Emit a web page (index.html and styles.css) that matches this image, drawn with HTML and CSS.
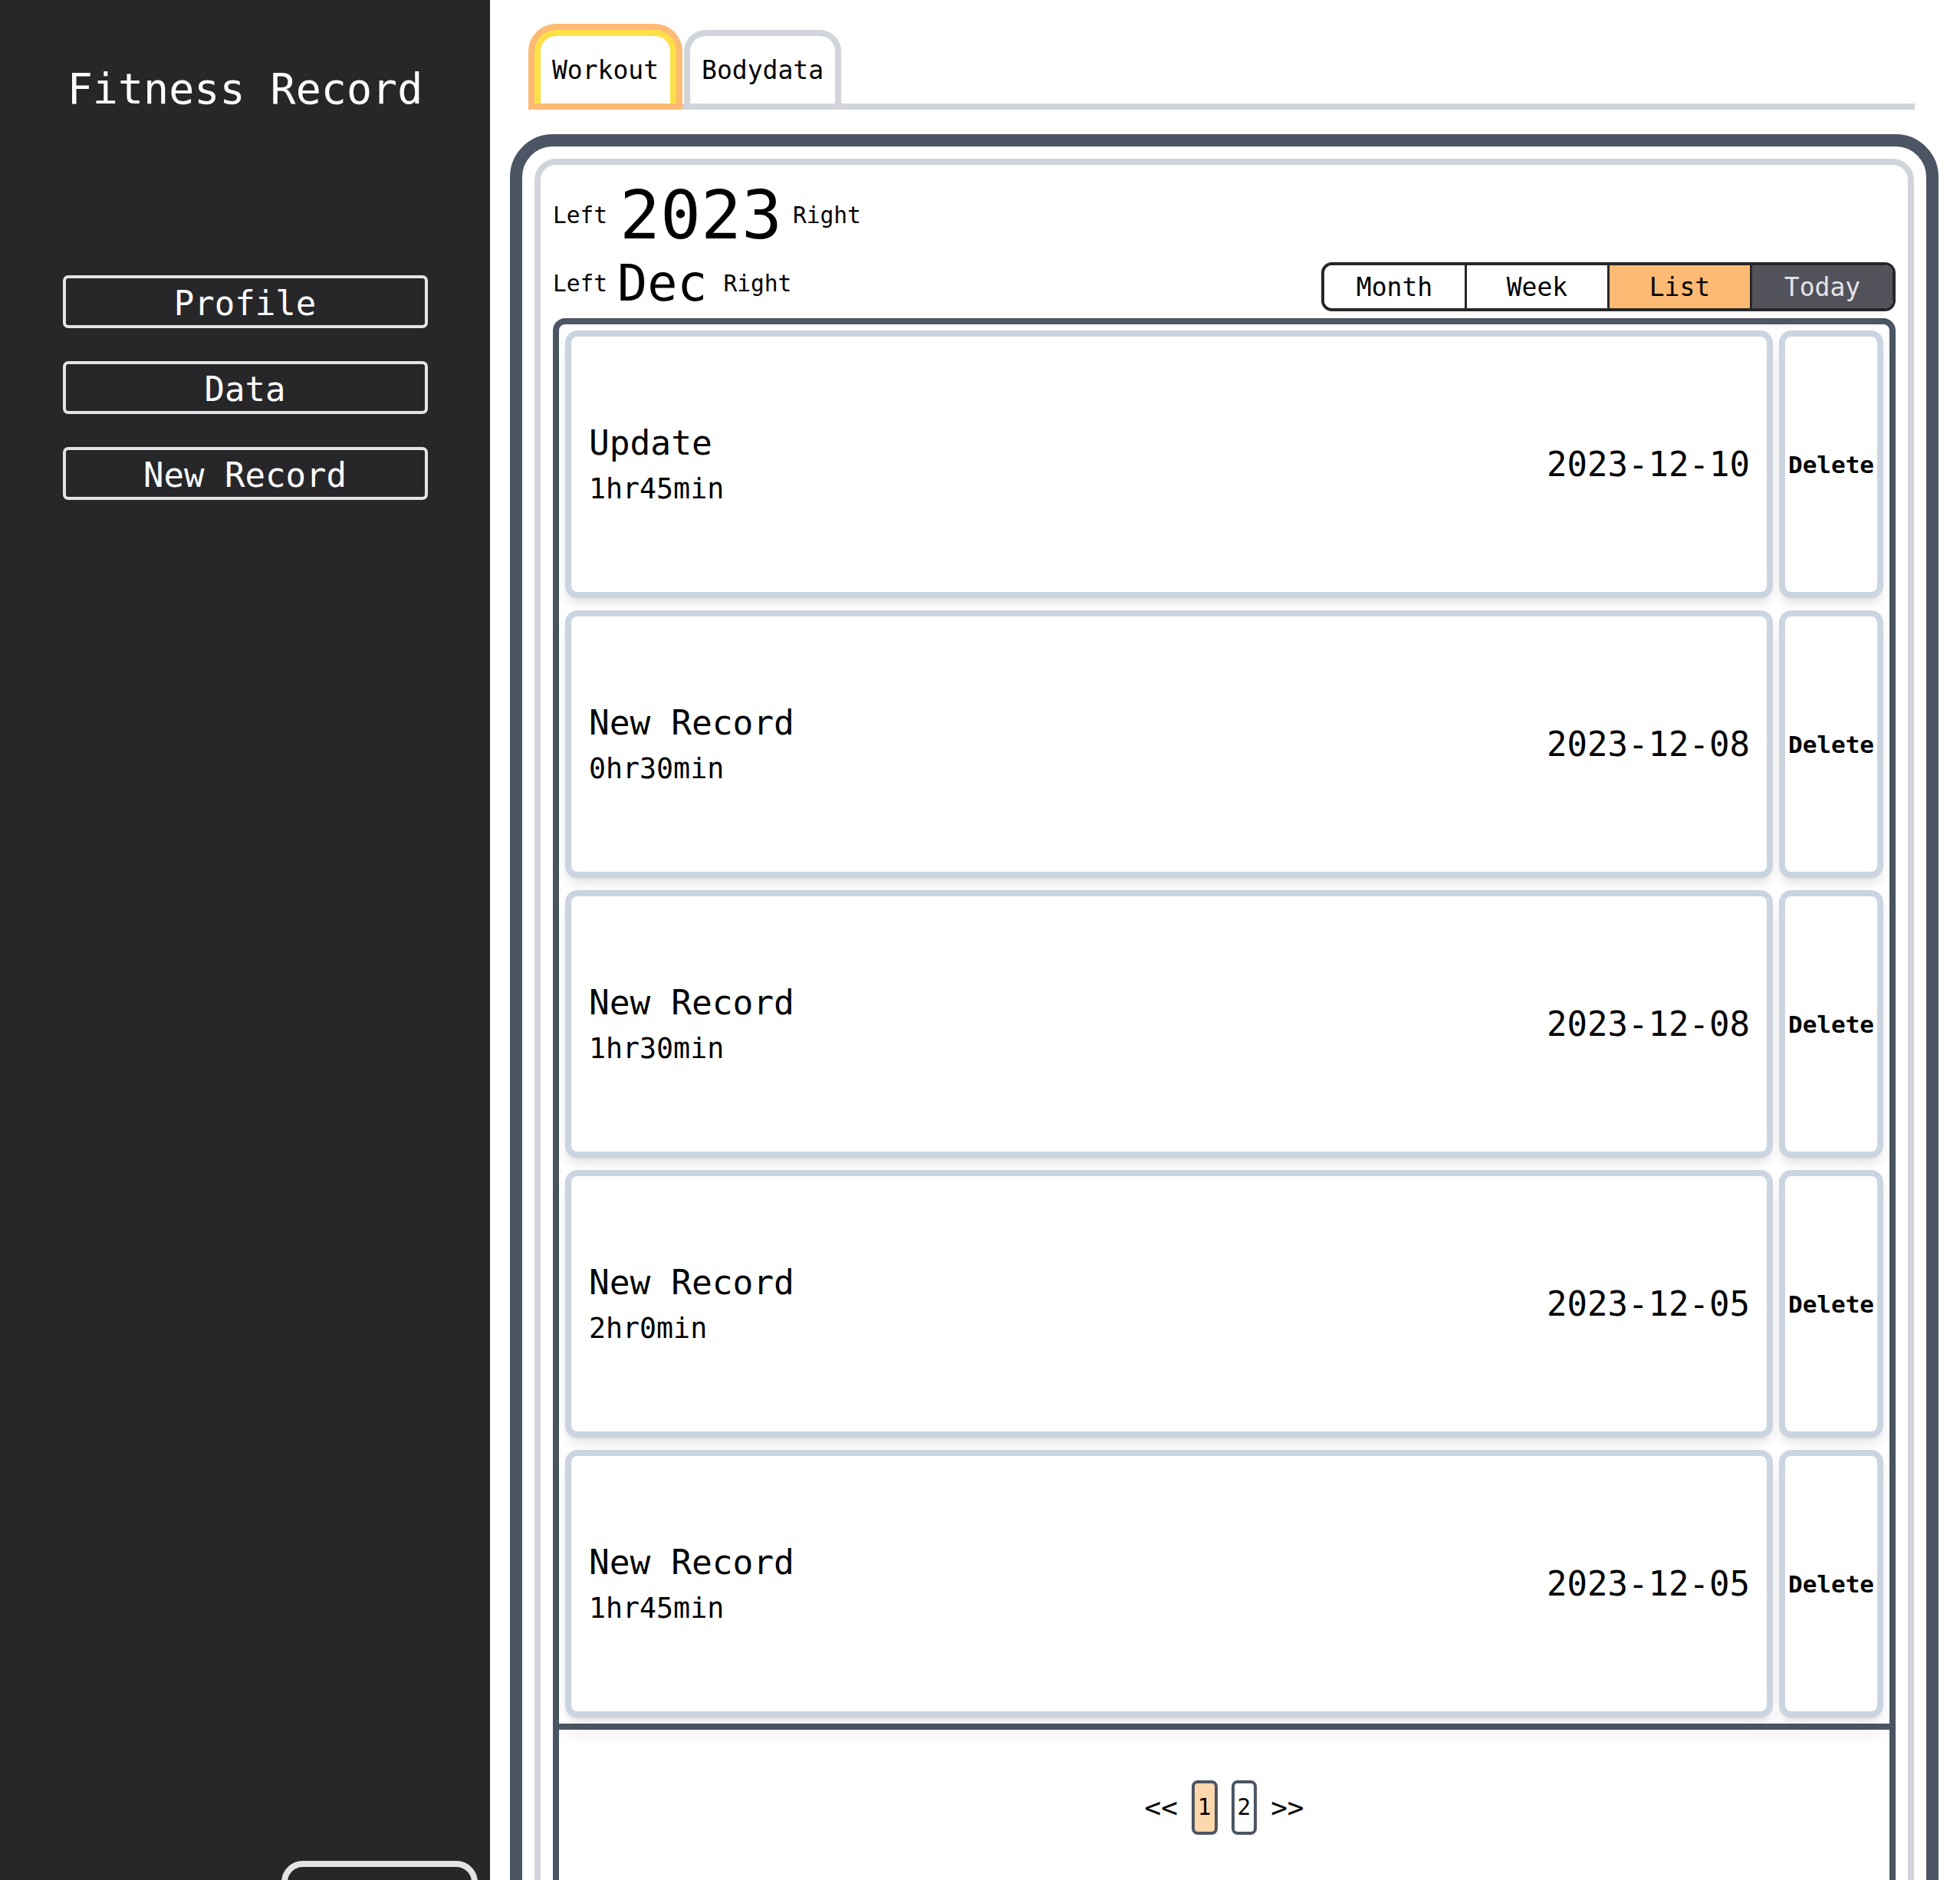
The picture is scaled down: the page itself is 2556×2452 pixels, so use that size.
FILE: index.html
```html
<!DOCTYPE html>
<html lang="en">
<head>
<meta charset="utf-8">
<title>Fitness Record</title>
<link rel="stylesheet" href="styles.css">
</head>
<body>
<div class="app">
  <aside class="sidebar">
    <h1 class="brand">Fitness Record</h1>
    <nav class="nav">
      <button class="nav-btn">Profile</button>
      <button class="nav-btn">Data</button>
      <button class="nav-btn">New Record</button>
    </nav>
    <button class="logout" aria-label="Logout"></button>
  </aside>

  <main class="main">
    <div class="tabs">
      <button class="tab tab-active">Workout</button>
      <button class="tab">Bodydata</button>
    </div>

    <section class="frame">
      <div class="card">
        <div class="year-row">
          <button class="arrow">Left</button>
          <span class="year">2023</span>
          <button class="arrow">Right</button>
        </div>

        <div class="month-row">
          <div class="month-nav">
            <button class="arrow">Left</button>
            <span class="month">Dec</span>
            <button class="arrow">Right</button>
          </div>
          <div class="toggle">
            <button class="seg">Month</button>
            <button class="seg">Week</button>
            <button class="seg seg-on">List</button>
            <button class="seg seg-today">Today</button>
          </div>
        </div>

        <div class="list">
          <div class="rows">
            <div class="row">
              <div class="rec">
                <div class="rec-info">
                  <div class="rec-name">Update</div>
                  <div class="rec-dur">1hr45min</div>
                </div>
                <div class="rec-date">2023-12-10</div>
              </div>
              <button class="del">Delete</button>
            </div>
            <div class="row">
              <div class="rec">
                <div class="rec-info">
                  <div class="rec-name">New Record</div>
                  <div class="rec-dur">0hr30min</div>
                </div>
                <div class="rec-date">2023-12-08</div>
              </div>
              <button class="del">Delete</button>
            </div>
            <div class="row">
              <div class="rec">
                <div class="rec-info">
                  <div class="rec-name">New Record</div>
                  <div class="rec-dur">1hr30min</div>
                </div>
                <div class="rec-date">2023-12-08</div>
              </div>
              <button class="del">Delete</button>
            </div>
            <div class="row">
              <div class="rec">
                <div class="rec-info">
                  <div class="rec-name">New Record</div>
                  <div class="rec-dur">2hr0min</div>
                </div>
                <div class="rec-date">2023-12-05</div>
              </div>
              <button class="del">Delete</button>
            </div>
            <div class="row">
              <div class="rec">
                <div class="rec-info">
                  <div class="rec-name">New Record</div>
                  <div class="rec-dur">1hr45min</div>
                </div>
                <div class="rec-date">2023-12-05</div>
              </div>
              <button class="del">Delete</button>
            </div>
          </div>

          <div class="pager">
            <button class="pg-arrow">&lt;&lt;</button>
            <button class="page page-on">1</button>
            <button class="page">2</button>
            <button class="pg-arrow">&gt;&gt;</button>
          </div>
        </div>
      </div>
    </section>
  </main>
</div>
</body>
</html>
```

FILE: styles.css
```css
* {
  box-sizing: border-box;
}

html,
body {
  margin: 0;
  height: 100%;
  overflow: hidden;
}

body {
  font-family: "DejaVu Sans Mono", monospace;
  background: #ffffff;
  color: #000000;
}

button {
  font: inherit;
  color: inherit;
  background: none;
  border: 0;
  padding: 0;
  margin: 0;
  cursor: pointer;
}

.app {
  display: flex;
  align-items: flex-start;
}

/* ---------- sidebar ---------- */
.sidebar {
  flex: 0 0 639px;
  height: 100vh;
  background: #27272a;
  display: flex;
  flex-direction: column;
  align-items: center;
  padding-top: 84px;
}

.brand {
  margin: 0;
  font-size: 55px;
  font-weight: normal;
  line-height: normal;
  color: #ffffff;
  white-space: pre;
}

.nav {
  margin-top: 211px;
  width: 476px;
  display: flex;
  flex-direction: column;
  gap: 43px;
}

.nav-btn {
  height: 69px;
  padding-top: 4px;
  border: 4px solid #e4e4e7;
  border-radius: 7px;
  color: #ffffff;
  font-size: 44px;
  line-height: 57px;
  white-space: pre;
}

.logout {
  margin-top: auto;
  margin-bottom: -75px;
  margin-right: 16px;
  align-self: flex-end;
  width: 256px;
  height: 100px;
  flex: none;
  border: 8px solid #e4e4e7;
  border-radius: 28px;
}

/* ---------- main ---------- */
.main {
  flex: 1;
  min-width: 0;
  padding: 39px 28px 0 26px;
}

.tabs {
  display: flex;
  align-items: flex-end;
  gap: 10px;
  margin: 0 31px 0 32px;
  border-bottom: 8px solid #d1d5db;
}

.tab {
  height: 96px;
  padding: 0 15px;
  border: 8px solid #d1d5db;
  border-bottom: 0;
  border-radius: 28px 28px 0 0;
  font-size: 33px;
  line-height: 90px;
  background: #ffffff;
}

.tab-active {
  border-color: #fde047;
  box-shadow: 0 0 0 8px #fdba74;
}

.frame {
  margin-top: 32px;
  border: 16px solid #4b5563;
  border-radius: 56px;
  padding: 16px;
}

.card {
  border: 8px solid #d1d5db;
  border-radius: 28px;
  padding: 22px 16px 16px;
}

.year-row {
  display: flex;
  align-items: center;
}

.arrow {
  font-size: 29.5px;
  line-height: normal;
}

.year {
  font-size: 88px;
  line-height: 1;
  margin: 0 14px 0 16px;
}

.month-row {
  display: flex;
  justify-content: space-between;
  align-items: flex-end;
  margin-top: 8px;
}

.month-nav {
  display: flex;
  align-items: center;
}

.month {
  font-size: 65px;
  line-height: 73px;
  margin: 0 21px 0 13px;
}

.toggle {
  display: flex;
  height: 64px;
  border: 4px solid #27272a;
  border-radius: 14px;
  overflow: hidden;
}

.seg {
  flex: none;
  width: 183px;
  font-size: 33px;
  line-height: 58px;
  text-align: center;
  background: #ffffff;
}

.seg + .seg {
  width: 186px;
  border-left: 3px solid #27272a;
}

.seg-on {
  background: #fdba74;
}

.seg-today {
  background: #52525b;
  color: #e4e4e7;
}

/* ---------- list ---------- */
.list {
  margin-top: 9px;
  border: 8px solid #4b5563;
  border-radius: 16px;
}

.rows {
  display: flex;
  flex-direction: column;
  gap: 16px;
  padding: 8px;
  border-bottom: 8px solid #4b5563;
  box-shadow: 0 12px 22px -6px rgba(0, 0, 0, 0.06);
}

.row {
  display: flex;
  gap: 8px;
  height: 349px;
}

.rec {
  flex: 1;
  display: flex;
  align-items: center;
  justify-content: space-between;
  padding: 0 22px 0 23px;
  border: 8px solid #cbd5e1;
  border-radius: 16px;
  background: #ffffff;
  box-shadow: 0 10px 15px -3px rgba(0, 0, 0, 0.1), 0 4px 6px -4px rgba(0, 0, 0, 0.1);
}

.rec-name {
  font-size: 44.5px;
  line-height: 1.5;
  white-space: pre;
}

.rec-dur {
  font-size: 36.6px;
  line-height: 1.5;
}

.rec-date {
  font-size: 44px;
}

.del {
  flex: none;
  width: 136px;
  border: 8px solid #cbd5e1;
  border-radius: 16px;
  background: #ffffff;
  font-size: 31px;
  font-weight: bold;
  text-align: center;
  box-shadow: 0 10px 15px -3px rgba(0, 0, 0, 0.1), 0 4px 6px -4px rgba(0, 0, 0, 0.1);
}

.pager {
  display: flex;
  justify-content: center;
  align-items: center;
  gap: 18px;
  padding: 66px 0 140px;
}

.pg-arrow {
  font-size: 36px;
  line-height: 1;
}

.page {
  border: 4px solid #4b5563;
  border-radius: 8px;
  padding: 14px 4px;
  font-size: 29.3px;
  line-height: 35px;
  background: #ffffff;
}

.page-on {
  background: #fed7aa;
}
```
